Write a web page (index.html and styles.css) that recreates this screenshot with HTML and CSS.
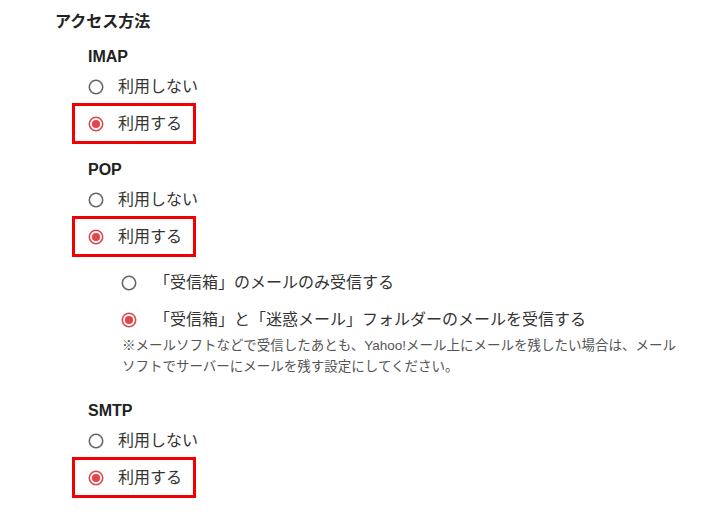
FILE: index.html
```html
<!DOCTYPE html>
<html lang="ja">
<head>
<meta charset="utf-8">
<link rel="stylesheet" href="styles.css">
</head>
<body>
<div class="page">
  <h2 class="title">アクセス方法</h2>

  <section class="group group-imap">
    <h3 class="label">IMAP</h3>
    <div class="row"><svg class="radio" viewBox="0 0 16 16"><circle cx="8" cy="8" r="6.7" class="ring"/></svg><span class="text">利用しない</span></div>
    <div class="row selected"><svg class="radio on" viewBox="0 0 16 16"><circle cx="8" cy="8" r="6.7" class="ring"/><circle cx="8" cy="8" r="4.1" class="dot"/></svg><span class="text">利用する</span></div>
  </section>

  <section class="group group-pop">
    <h3 class="label">POP</h3>
    <div class="row"><svg class="radio" viewBox="0 0 16 16"><circle cx="8" cy="8" r="6.7" class="ring"/></svg><span class="text">利用しない</span></div>
    <div class="row selected"><svg class="radio on" viewBox="0 0 16 16"><circle cx="8" cy="8" r="6.7" class="ring"/><circle cx="8" cy="8" r="4.1" class="dot"/></svg><span class="text">利用する</span></div>
    <div class="sub">
      <div class="row"><svg class="radio" viewBox="0 0 16 16"><circle cx="8" cy="8" r="6.7" class="ring"/></svg><span class="text">「受信箱」のメールのみ受信する</span></div>
      <div class="row"><svg class="radio on" viewBox="0 0 16 16"><circle cx="8" cy="8" r="6.7" class="ring"/><circle cx="8" cy="8" r="4.1" class="dot"/></svg><span class="text">「受信箱」と「迷惑メール」フォルダーのメールを受信する</span></div>
      <p class="note">※メールソフトなどで受信したあとも、Yahoo!メール上にメールを残したい場合は、メール<br>ソフトでサーバーにメールを残す設定にしてください。</p>
    </div>
  </section>

  <section class="group group-smtp">
    <h3 class="label">SMTP</h3>
    <div class="row"><svg class="radio" viewBox="0 0 16 16"><circle cx="8" cy="8" r="6.7" class="ring"/></svg><span class="text">利用しない</span></div>
    <div class="row selected"><svg class="radio on" viewBox="0 0 16 16"><circle cx="8" cy="8" r="6.7" class="ring"/><circle cx="8" cy="8" r="4.1" class="dot"/></svg><span class="text">利用する</span></div>
  </section>
</div>
</body>
</html>
```

FILE: styles.css
```css
html, body {
  margin: 0;
  padding: 0;
  background: #ffffff;
}

body {
  font-family: "Liberation Sans", "Noto Sans CJK JP", sans-serif;
  color: #333333;
  width: 720px;
  height: 517px;
  overflow: hidden;
}

.page {
  padding: 10px 0 0 55px;
}

.title {
  margin: 0;
  font-size: 16px;
  line-height: 24px;
  font-weight: 700;
  color: #222222;
}

.group {
  display: flex;
  flex-direction: column;
  align-items: flex-start;
}

.group-imap { margin-top: 13px; }
.group-pop { margin-top: 16px; }
.group-smtp { margin-top: 24px; }

.label {
  margin: 0 0 0 33px;
  font-size: 16px;
  line-height: 20px;
  font-weight: 700;
  color: #222222;
}

.row {
  box-sizing: border-box;
  display: flex;
  align-items: center;
  height: 41px;
  margin-left: 17px;
  padding: 0 11px 0 13px;
  border: 3px solid transparent;
}

.label + .row {
  margin-top: -1px;
}

.row + .row {
  margin-top: -4px;
}

.row.selected {
  border-color: #f00000;
}

.radio {
  width: 16px;
  height: 16px;
  flex: none;
  display: block;
}

.radio .ring {
  fill: #ffffff;
  stroke: #666666;
  stroke-width: 1.6;
}

.radio.on .ring {
  stroke: #e0474c;
}

.radio .dot {
  fill: #e0474c;
}

.text {
  margin-left: 14px;
  font-size: 16px;
  line-height: 22px;
  color: #333333;
}

.sub {
  margin-left: 50px;
  margin-top: 5px;
}

.sub .row {
  margin-left: 0;
}

.sub .text {
  margin-left: 17px;
}

.note {
  margin: -5px 0 0 17px;
  font-size: 13.5px;
  line-height: 21px;
  color: #555555;
}
```
